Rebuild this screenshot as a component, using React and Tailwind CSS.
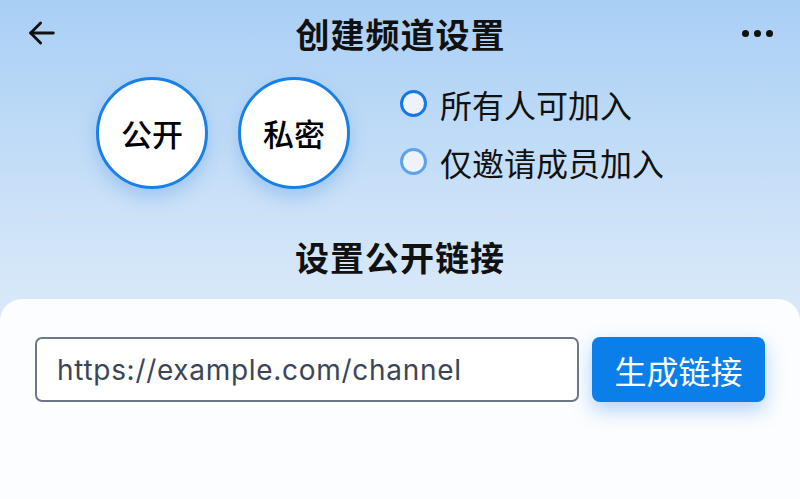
import React, { useState } from 'react';

const cjk = { fontFamily: '"Noto Sans CJK SC", "Noto Sans", sans-serif' };

const ModeCircle = ({ label }) => (
  <button className="w-[112px] h-[112px] rounded-full bg-white border-[3px] border-[#1a7fe6] shadow-[0_8px_18px_rgba(80,150,230,0.35)] flex items-center justify-center text-[31px] font-medium text-black">
    {label}
  </button>
);

const Radio = ({ label, active }) => (
  <div className="flex items-center gap-[13px]">
    <span
      className={
        active
          ? 'w-[27px] h-[27px] rounded-full border-[3px] border-[#1677e5] bg-[#eef3fb]'
          : 'w-[27px] h-[27px] rounded-full border-[3px] border-[#5da2ec] bg-[#eef3fb]'
      }
    />
    <span className="text-[32px] leading-none text-[#111]">{label}</span>
  </div>
);

export default function App() {
  const [url] = useState('https://example.com/channel');

  return (
    <div
      className="w-[800px] h-[499px] overflow-hidden flex flex-col bg-gradient-to-b from-[#a9cff5] via-[#d2e5f8] to-[#eaf2fb]"
      style={cjk}
    >
      {/* header */}
      <div className="h-[66px] flex items-center justify-between px-[25px]">
        <svg width="34" height="34" viewBox="0 0 24 24" fill="none" stroke="#111" strokeWidth="2" strokeLinecap="round" strokeLinejoin="round">
          <path d="M20 12H4" />
          <path d="M11 5l-7 7 7 7" />
        </svg>
        <h1 className="text-[34px] font-bold text-[#111] tracking-[1px]">创建频道设置</h1>
        <div className="flex gap-[5px] pr-[2px]">
          <span className="w-[7px] h-[7px] rounded-full bg-[#111]" />
          <span className="w-[7px] h-[7px] rounded-full bg-[#111]" />
          <span className="w-[7px] h-[7px] rounded-full bg-[#111]" />
        </div>
      </div>

      {/* visibility */}
      <div className="flex items-center pl-[96px] pt-[11px] gap-[30px]">
        <ModeCircle label="公开" />
        <ModeCircle label="私密" />
        <div className="flex flex-col gap-[26px] pl-[20px] -mt-[1px]">
          <Radio label="所有人可加入" active />
          <Radio label="仅邀请成员加入" />
        </div>
      </div>

      <div className="mx-[35px] mt-[25px] h-px bg-[#e3d9e2]" />

      <h2 className="text-center text-[34px] font-bold text-[#111] mt-[25px] leading-none tracking-[1px]">设置公开链接</h2>

      {/* card */}
      <div className="mt-[25px] flex-1 bg-[#fcfdfe] rounded-t-[22px] px-[35px] pt-[38px]">
        <div className="flex gap-[13px]">
          <input
            readOnly
            value={url}
            className="w-[545px] h-[65px] rounded-[7px] border-2 border-[#6e7787] bg-white px-[20px] text-[28px] tracking-[0.7px] text-[#3b4558] outline-none"
            style={{ fontFamily: 'Inter, "Liberation Sans", sans-serif' }}
          />
          <button className="w-[173px] h-[65px] rounded-[8px] bg-[#0b7fe9] text-white text-[32px] shadow-[0_8px_20px_rgba(30,130,240,0.35)]">
            生成链接
          </button>
        </div>
      </div>
    </div>
  );
}
